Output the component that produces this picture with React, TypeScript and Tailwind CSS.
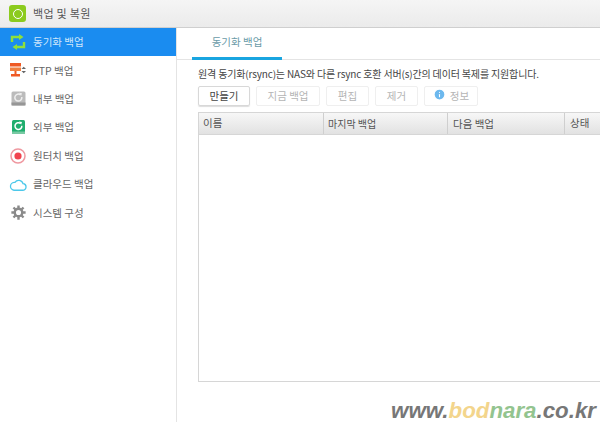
import { Info } from 'lucide-react';

const kr = "font-['Noto_Sans_CJK_KR','Noto_Sans',sans-serif]";

function SyncIcon() {
  return (
    <svg width="16" height="16" viewBox="0 0 16 16" fill="none">
      <path d="M2 8V3h8" stroke="#8fe03a" strokeWidth="2.4" />
      <path d="M9 0l4.500 3L9 6z" fill="#8fe03a" />
      <path d="M14 8v5H6" stroke="#8fe03a" strokeWidth="2.4" />
      <path d="M7 10l-4.500 3L7 16z" fill="#8fe03a" />
    </svg>
  );
}

function FtpIcon() {
  return (
    <svg width="16" height="15" viewBox="0 0 16 15">
      <rect x="0" y="0" width="11" height="3.500" fill="#ef5a24" />
      <rect x="0" y="4.500" width="11" height="3.500" fill="#f08040" />
      <rect x="4.500" y="8" width="2" height="3" fill="#ef5a24" />
      <rect x="1" y="11" width="9" height="2.500" fill="#ef5a24" />
      <path d="M11.500 6l2.200-2.200L16 6z" fill="#666" />
      <path d="M11.500 8l2.200 2.200L16 8z" fill="#666" />
    </svg>
  );
}

function InternalIcon() {
  return (
    <svg width="15" height="15" viewBox="0 0 15 15" fill="none">
      <rect x="0.500" y="0.500" width="14" height="14" rx="1.500" fill="#bbb" />
      <rect x="0.500" y="11.500" width="14" height="3" fill="#969696" />
      <path d="M10.800 6a3.500 3.500 0 1 1-1.300-2.200" stroke="#eee" strokeWidth="1.500" />
      <path d="M8 1.800l3 .5-.9 2.700z" fill="#eee" />
    </svg>
  );
}

function ExternalIcon() {
  return (
    <svg width="13" height="14" viewBox="0 0 13 14" fill="none">
      <rect x="0" y="0" width="13" height="14" rx="1.500" fill="#1fae6e" />
      <rect x="0" y="11.500" width="13" height="2.500" fill="#79c9a3" />
      <path d="M9.800 5.800a3.400 3.400 0 1 1-1.200-2.300" stroke="#fff" strokeWidth="1.500" />
      <path d="M7 1.500l3 .5-.9 2.700z" fill="#fff" />
    </svg>
  );
}

function OneTouchIcon() {
  return (
    <svg width="16" height="16" viewBox="0 0 16 16">
      <circle cx="8" cy="8" r="7" fill="#fff" stroke="#ef98a0" strokeWidth="1.500" />
      <circle cx="8" cy="8" r="3.600" fill="#f0444f" />
    </svg>
  );
}

function CloudIcon() {
  return (
    <svg width="18" height="15" viewBox="0 0 22 18" fill="none">
      <path
        d="M6 16h10.500a4 4 0 0 0 .6-8A5.400 5.400 0 0 0 7.300 6.400 4.800 4.800 0 0 0 6 16z"
        stroke="#4cc8ea"
        strokeWidth="1.600"
      />
    </svg>
  );
}

function GearIcon() {
  return (
    <svg width="15" height="15" viewBox="0 0 20 20" fill="none">
      <circle cx="10" cy="10" r="5" stroke="#8a8a8a" strokeWidth="3.200" />
      <path
        d="M10 0.500v4M10 15v4.500M0.500 10H5M15 10h4.500M3.300 3.300l3 3M13.700 13.700l3 3M16.700 3.300l-3 3M6.300 13.700l-3 3"
        stroke="#8a8a8a"
        strokeWidth="3.200"
      />
    </svg>
  );
}

const menu = [
  { label: '동기화 백업', icon: <SyncIcon />, active: true },
  { label: 'FTP 백업', icon: <FtpIcon /> },
  { label: '내부 백업', icon: <InternalIcon /> },
  { label: '외부 백업', icon: <ExternalIcon /> },
  { label: '원터치 백업', icon: <OneTouchIcon /> },
  { label: '클라우드 백업', icon: <CloudIcon /> },
  { label: '시스템 구성', icon: <GearIcon /> },
];

function Btn({ children, active, w }: { children: React.ReactNode; active?: boolean; w: string }) {
  return (
    <div
      className={`${w} h-[20px] flex items-center justify-center gap-1 rounded-[2px] border text-[10.5px] ${
        active ? 'border-[#d8d8d8] text-[#444] shadow-[0_1px_1px_#ddd]' : 'border-[#efefef] text-[#b5b5b5]'
      }`}
    >
      {children}
    </div>
  );
}

export default function App() {
  return (
    <div className={`${kr} relative w-[600px] h-[422px] overflow-hidden bg-white flex flex-col`}>
      <div className="h-[28px] shrink-0 flex items-center bg-gradient-to-b from-[#f5f5f5] to-[#ebebeb] border-b border-[#cfcfcf] pl-[9px] gap-[7px]">
        <div className="w-[17px] h-[17px] rounded-[3px] bg-[#8ccb1e] flex items-center justify-center">
          <div className="w-[10px] h-[10px] rounded-full border-[1.500px] border-white" />
        </div>
        <span className="text-[11px] text-[#555] tracking-[0.3px]">백업 및 복원</span>
      </div>
      <div className="flex-1 flex min-h-0">
        <div className="w-[177px] shrink-0 border-r border-[#e4e4e4] flex flex-col">
          {menu.map((m) => (
            <div
              key={m.label}
              className={`h-[28.400px] flex items-center ${m.active ? 'bg-[#1a8cf0] text-[#cfe6fa]' : 'text-[#666]'}`}
            >
              <div className="w-[33px] flex justify-center pl-[3px]">{m.icon}</div>
              <span className="text-[10.5px]">{m.label}</span>
            </div>
          ))}
        </div>
        <div className="flex-1 flex flex-col min-w-0">
          <div className="h-[32px] shrink-0 border-b border-[#e4e4e4] pl-[15px]">
            <div className="w-[90px] h-[32px] border-b-[3px] border-[#19a5e0] flex items-center justify-center pb-[2px] text-[10.5px] text-[#6a9ba8]">
              동기화 백업
            </div>
          </div>
          <div className="flex-1 flex flex-col pl-[21px] min-h-0">
            <p className="mt-[6px] h-[16px] leading-[16px] text-[10px] tracking-[-0.16px] text-[#444] whitespace-nowrap">
              원격 동기화(rsync)는 NAS와 다른 rsync 호환 서버(s)간의 데이터 복제를 지원합니다.
            </p>
            <div className="mt-[4px] flex gap-[6px]">
              <Btn active w="w-[52px]">만들기</Btn>
              <Btn w="w-[64px]">지금 백업</Btn>
              <Btn w="w-[43px]">편집</Btn>
              <Btn w="w-[43px]">제거</Btn>
              <Btn w="w-[54px]">
                <Info size={13} fill="#6cb8ee" color="#fff" className="-mt-[4px]" />
                정보
              </Btn>
            </div>
            <div className="mt-[6px] h-[270px] border border-[#d6d6d6] border-r-0 flex flex-col">
              <div className="h-[22px] flex bg-gradient-to-b from-[#f7f7f7] to-[#e2e2e2] text-[10.5px] text-[#555] border-b border-[#d6d6d6]">
                <div className="w-[125px] pl-[4px] pb-[2px] flex items-center border-r border-[#cfcfcf]">이름</div>
                <div className="w-[124px] pl-[4px] flex items-center border-r border-[#cfcfcf] text-[10px]">마지막 백업</div>
                <div className="w-[117px] pl-[5px] flex items-center border-r border-[#cfcfcf]">다음 백업</div>
                <div className="flex-1 pl-[5px] pb-[2px] flex items-center">상태</div>
              </div>
            </div>
          </div>
        </div>
      </div>
      <div className="absolute right-[4px] bottom-[-1px] font-['Liberation_Sans',sans-serif] italic font-bold text-[22.300px] leading-[24px] text-[#777]">
        www.<span className="text-[#f3d58c]">bod</span>
        <span className="text-[#93c48f]">nara</span>.co.kr
      </div>
    </div>
  );
}
